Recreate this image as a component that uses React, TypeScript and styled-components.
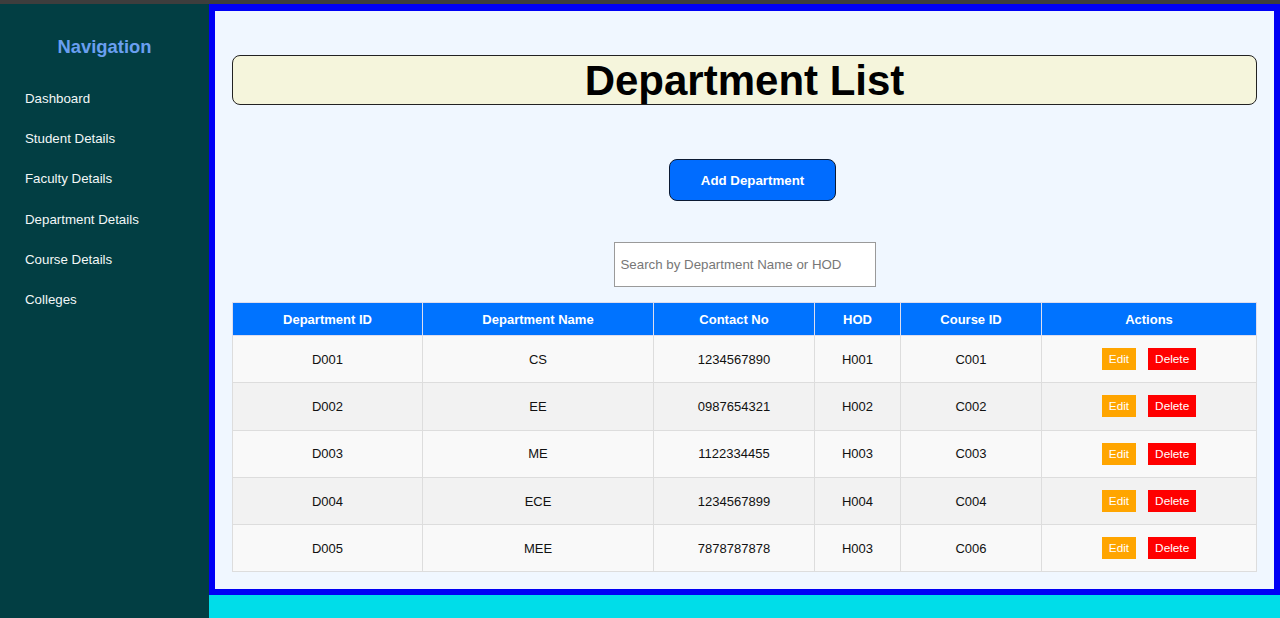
import React from "react";
import styled, { createGlobalStyle } from "styled-components";

const GlobalStyle = createGlobalStyle`
  html, body {
    margin: 0;
    padding: 0;
    background: #00dde9;
    font-family: "Liberation Sans", Arial, sans-serif;
  }
  * { box-sizing: border-box; }
`;

const TopStrip = styled.div`
  height: 4px;
  background: #3d3d3d;
`;

const Layout = styled.div`
  display: flex;
  align-items: flex-start;
  min-height: 614px;
`;

const Sidebar = styled.nav`
  width: 209px;
  min-height: 614px;
  background: #023e43;
  padding: 32px 0 0 0;
  display: flex;
  flex-direction: column;
  flex-shrink: 0;
`;

const NavTitle = styled.h2`
  margin: 0 0 34px 0;
  text-align: center;
  font-size: 18.4px;
  line-height: 21px;
  font-weight: bold;
  color: #6a9ff0;
`;

const NavList = styled.ul`
  list-style: none;
  margin: 0;
  padding: 0 0 0 25px;
  display: flex;
  flex-direction: column;
  gap: 24.2px;
`;

const NavItem = styled.li`
  font-size: 13.3px;
  line-height: 16px;
  color: #f2f7f7;
`;

const Main = styled.main`
  flex: 1;
  min-width: 0;
`;

const Panel = styled.section`
  border: 6px solid #0000f5;
  border-top-width: 7px;
  background: #f0f7ff;
  padding: 44px 17px 17px 17px;
  display: flex;
  flex-direction: column;
  align-items: center;
`;

const TitleBox = styled.h1`
  align-self: stretch;
  margin: 0;
  height: 50px;
  background: #f5f5dc;
  border: 1.5px solid #222;
  border-radius: 8px;
  text-align: center;
  font-size: 42px;
  line-height: 50px;
  font-weight: bold;
  color: #000;
`;

const AddButton = styled.button`
  margin-top: 54px;
  margin-left: 16px;
  width: 167px;
  height: 42px;
  background: #006cff;
  color: #fff;
  border: 1.5px solid #0b1a33;
  border-radius: 8px;
  font-family: "Liberation Sans", Arial, sans-serif;
  font-size: 13.3px;
  font-weight: bold;
`;

const SearchInput = styled.input`
  margin-top: 41px;
  width: 262px;
  height: 45px;
  border: 1px solid #9a9a9a;
  background: #fff;
  padding: 0 6px;
  font-family: "Liberation Sans", Arial, sans-serif;
  font-size: 13.3px;
  color: #333;
  &::placeholder { color: #777; }
`;

const Table = styled.table`
  margin-top: 15px;
  align-self: stretch;
  border-collapse: collapse;
  table-layout: fixed;
  font-size: 13px;
`;

const HeadCell = styled.th`
  height: 33px;
  background: #0073ff;
  color: #fff;
  font-weight: bold;
  font-size: 13px;
  text-align: center;
  border: 1px solid #dde;
  padding: 0;
`;

const Row = styled.tr<{ $alt: boolean }>`
  background: ${(p) => (p.$alt ? "#f2f2f2" : "#f9f9f9")};
`;

const Cell = styled.td`
  height: 47.3px;
  text-align: center;
  color: #111;
  border: 1px solid #ddd;
  padding: 0;
`;

const Actions = styled.div`
  display: flex;
  justify-content: center;
  gap: 12px;
`;

const SmallButton = styled.button<{ $kind: "edit" | "delete" }>`
  height: 22px;
  padding: 0 7px;
  border: none;
  background: ${(p) => (p.$kind === "edit" ? "#ffa500" : "#ff0000")};
  color: #fff;
  font-family: "Liberation Sans", Arial, sans-serif;
  font-size: 11.8px;
`;

const navItems = [
  "Dashboard",
  "Student Details",
  "Faculty Details",
  "Department Details",
  "Course Details",
  "Colleges",
];

const columns = [
  { label: "Department ID", width: 190 },
  { label: "Department Name", width: 231 },
  { label: "Contact No", width: 161 },
  { label: "HOD", width: 86 },
  { label: "Course ID", width: 141 },
  { label: "Actions", width: 215 },
];

const rows = [
  ["D001", "CS", "1234567890", "H001", "C001"],
  ["D002", "EE", "0987654321", "H002", "C002"],
  ["D003", "ME", "1122334455", "H003", "C003"],
  ["D004", "ECE", "1234567899", "H004", "C004"],
  ["D005", "MEE", "7878787878", "H003", "C006"],
];

export default function App() {
  return (
    <>
      <GlobalStyle />
      <TopStrip />
      <Layout>
        <Sidebar>
          <NavTitle>Navigation</NavTitle>
          <NavList>
            {navItems.map((n) => (
              <NavItem key={n}>{n}</NavItem>
            ))}
          </NavList>
        </Sidebar>
        <Main>
          <Panel>
            <TitleBox>Department List</TitleBox>
            <AddButton>Add Department</AddButton>
            <SearchInput placeholder="Search by Department Name or HOD" />
            <Table>
              <colgroup>
                {columns.map((c) => (
                  <col key={c.label} style={{ width: c.width }} />
                ))}
              </colgroup>
              <thead>
                <tr>
                  {columns.map((c) => (
                    <HeadCell key={c.label}>{c.label}</HeadCell>
                  ))}
                </tr>
              </thead>
              <tbody>
                {rows.map((r, i) => (
                  <Row key={r[0]} $alt={i % 2 === 1}>
                    {r.map((v, j) => (
                      <Cell key={j}>{v}</Cell>
                    ))}
                    <Cell>
                      <Actions>
                        <SmallButton $kind="edit">Edit</SmallButton>
                        <SmallButton $kind="delete">Delete</SmallButton>
                      </Actions>
                    </Cell>
                  </Row>
                ))}
              </tbody>
            </Table>
          </Panel>
        </Main>
      </Layout>
    </>
  );
}
